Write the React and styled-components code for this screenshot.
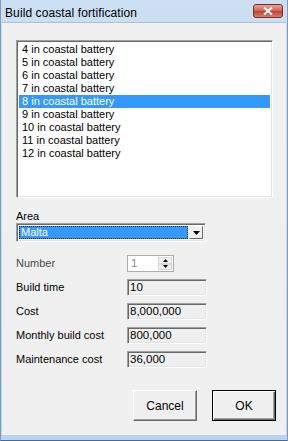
import React from 'react'
import styled, { createGlobalStyle } from 'styled-components'

const Global = createGlobalStyle`
  html, body {
    margin: 0;
    padding: 0;
    background: #fff;
  }
  body {
    font-family: 'Liberation Sans', Arial, sans-serif;
    font-size: 11px;
    color: #000;
  }
`

const Window = styled.div`
  width: 288px;
  height: 441px;
  box-sizing: border-box;
  display: flex;
  flex-direction: column;
  background: linear-gradient(#cddff2, #b9d3ee);
  border-left: 1px solid #7e9cc0;
  border-right: 1px solid #7e9cc0;
  border-bottom: 1px solid #3e6d9c;
  padding: 0 1px 5px 1px;
`

const TitleBar = styled.div`
  height: 22px;
  flex: none;
  display: flex;
  align-items: flex-start;
  justify-content: space-between;
  padding: 0 3px 0 3px;
`

const Caption = styled.div`
  font-family: 'Liberation Sans', Arial, sans-serif;
  font-size: 12px;
  line-height: 14px;
  margin-top: 6px;
  letter-spacing: 0.1px;
`

const CloseButton = styled.div`
  width: 30px;
  height: 14px;
  margin-top: 4px;
  box-sizing: border-box;
  border: 1px solid #7d2a22;
  border-radius: 3px;
  background: linear-gradient(#e8a595, #d16a5a 45%, #c1422f 55%, #d2826e);
  display: flex;
  align-items: center;
  justify-content: center;
`

const Client = styled.div`
  flex: 1;
  background: #f0f0f0;
  display: flex;
  flex-direction: column;
  padding: 17px 13px 0 14px;
  border-top: 1px solid #a9c0da;
`

const sunken = `
  border-style: solid;
  border-width: 1px;
  border-color: #a0a0a0 #fff #fff #a0a0a0;
  box-shadow: inset 1px 1px 0 #696969, inset -1px -1px 0 #e3e3e3;
`

const ListBox = styled.div`
  ${sunken}
  height: 158px;
  background: #fff;
  padding: 2px 2px;
  box-sizing: border-box;
  display: flex;
  flex-direction: column;
`

const ListItem = styled.div`
  height: 13px;
  line-height: 13px;
  padding-left: 3px;
  white-space: nowrap;
  background: ${p => (p.$selected ? '#3399ff' : 'transparent')};
  color: ${p => (p.$selected ? '#fff' : '#000')};
`

const FieldLabel = styled.div`
  margin-top: 11px;
  height: 14px;
  line-height: 14px;
`

const Combo = styled.div`
  ${sunken}
  width: 190px;
  height: 19px;
  box-sizing: border-box;
  background: #fff;
  display: flex;
  padding: 2px;
  gap: 1px;
`

const ComboValue = styled.div`
  flex: 1;
  background: #3399ff;
  color: #fff;
  line-height: 13px;
  padding-left: 2px;
  outline: 1px dotted #1a1a1a;
  outline-offset: -1px;
`

const DropButton = styled.div`
  width: 14px;
  background: #f0f0f0;
  box-sizing: border-box;
  border-style: solid;
  border-width: 1px;
  border-color: #fff #696969 #696969 #fff;
  display: flex;
  align-items: center;
  justify-content: center;
`

const Fields = styled.div`
  margin-top: 13px;
  display: grid;
  grid-template-columns: 111px 80px;
  grid-auto-rows: 17px;
  row-gap: 7px;
  align-items: center;
`

const Label = styled.div`
  line-height: 13px;
  color: ${p => (p.$disabled ? '#4a4a4a' : '#000')};
`

const ReadBox = styled.div`
  ${sunken}
  height: 17px;
  box-sizing: border-box;
  background: #f0f0f0;
  line-height: 14px;
  padding-left: 2px;
  font-size: 11.5px;
`

const Spin = styled.div`
  width: 47px;
  height: 17px;
  box-sizing: border-box;
  border: 1px solid #adadad;
  background: #fff;
  display: flex;
  color: #8a8a8a;
  line-height: 14px;
`

const SpinText = styled.div`
  flex: 1;
  padding-left: 3px;
  font-size: 11.5px;
`

const SpinButtons = styled.div`
  width: 14px;
  display: flex;
  flex-direction: column;
  padding: 1px;
`

const SpinHalf = styled.div`
  flex: 1;
  background: #f0f0f0;
  border: 1px solid #d8d8d8;
  display: flex;
  align-items: center;
  justify-content: center;
`

const Buttons = styled.div`
  margin-top: 22px;
  margin-right: -3px;
  display: flex;
  justify-content: flex-end;
  gap: 15px;
`

const Button = styled.div`
  width: 64px;
  height: 31px;
  box-sizing: border-box;
  background: #f0f0f0;
  border-style: solid;
  border-width: 1px;
  border-color: ${p => (p.$default ? '#000' : '#fff #696969 #696969 #fff')};
  box-shadow: ${p =>
    p.$default
      ? 'inset 1px 1px 0 #fff, inset -1px -1px 0 #696969, inset -2px -2px 0 #a0a0a0'
      : 'inset -1px -1px 0 #a0a0a0'};
  display: flex;
  align-items: center;
  justify-content: center;
  font-size: 12px;
`

const Arrow = ({ up, size = 7 }) => (
  <svg width={size} height={Math.ceil(size / 2)} viewBox="0 0 7 4">
    <path d={up ? 'M0 4 L3.5 0 L7 4 Z' : 'M0 0 L7 0 L3.5 4 Z'} fill="#000" />
  </svg>
)

const items = [4, 5, 6, 7, 8, 9, 10, 11, 12]

const costs = [
  ['Build time', '10'],
  ['Cost', '8,000,000'],
  ['Monthly build cost', '800,000'],
  ['Maintenance cost', '36,000'],
]

export default function App() {
  return (
    <>
      <Global />
      <Window>
        <TitleBar>
          <Caption>Build coastal fortification</Caption>
          <CloseButton>
            <svg width="10" height="8" viewBox="0 0 10 8">
              <path d="M1 0.5 L9 7.5 M9 0.5 L1 7.5" stroke="#fff" strokeWidth="2" />
            </svg>
          </CloseButton>
        </TitleBar>
        <Client>
          <ListBox>
            {items.map(n => (
              <ListItem key={n} $selected={n === 8}>
                {n} in coastal battery
              </ListItem>
            ))}
          </ListBox>
          <FieldLabel>Area</FieldLabel>
          <Combo>
            <ComboValue>Malta</ComboValue>
            <DropButton>
              <Arrow />
            </DropButton>
          </Combo>
          <Fields>
            <Label $disabled>Number</Label>
            <Spin>
              <SpinText>1</SpinText>
              <SpinButtons>
                <SpinHalf>
                  <Arrow up size={5} />
                </SpinHalf>
                <SpinHalf>
                  <Arrow size={5} />
                </SpinHalf>
              </SpinButtons>
            </Spin>
            {costs.map(([label, value]) => (
              <React.Fragment key={label}>
                <Label>{label}</Label>
                <ReadBox>{value}</ReadBox>
              </React.Fragment>
            ))}
          </Fields>
          <Buttons>
            <Button>Cancel</Button>
            <Button $default>OK</Button>
          </Buttons>
        </Client>
      </Window>
    </>
  )
}
